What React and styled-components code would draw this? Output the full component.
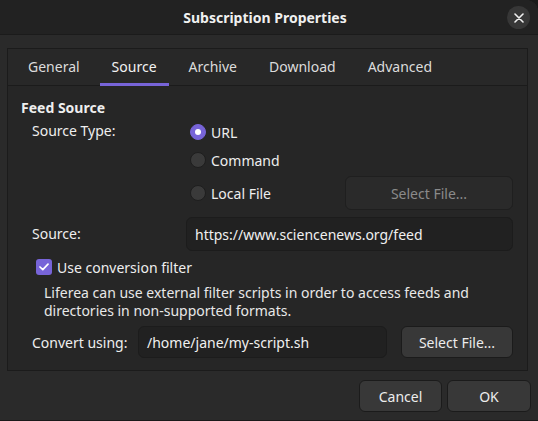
import React from "react";
import styled, { createGlobalStyle } from "styled-components";

const GlobalStyle = createGlobalStyle`
    html, body {
        margin: 0;
        padding: 0;
        background: #1a1a1a;
    }
    body {
        font-family: "Noto Sans", "DejaVu Sans", sans-serif;
        font-size: 14px;
        color: #eeeeee;
    }
`;

const Window = styled.div`
    width: 538px;
    height: 421px;
    box-sizing: border-box;
    background: #2a2a2a;
    border-top-right-radius: 12px;
    border-bottom: 1px solid #1a1a1a;
    overflow: hidden;
    display: flex;
    flex-direction: column;
`;

const HeaderBar = styled.div`
    height: 35px;
    flex: none;
    box-sizing: border-box;
    background: #222222;
    border-bottom: 1px solid #1b1b1b;
    display: grid;
    grid-template-columns: 1fr auto 1fr;
    align-items: center;
    padding-right: 8px;
`;

const Title = styled.div`
    grid-column: 2;
    font-weight: bold;
    font-size: 14px;
    color: #f0f0f0;
`;

const CloseButton = styled.button`
    grid-column: 3;
    justify-self: end;
    width: 23px;
    height: 23px;
    border-radius: 50%;
    border: none;
    padding: 0;
    background: #373737;
    display: flex;
    align-items: center;
    justify-content: center;
    margin-top: 1px;
`;

const Body = styled.div`
    flex: 1;
    display: flex;
    flex-direction: column;
    padding: 13px 10px 0 7px;
`;

const Notebook = styled.div`
    border: 1px solid #1b1b1b;
    background: #262626;
    display: flex;
    flex-direction: column;
`;

const TabBar = styled.div`
    height: 36px;
    display: flex;
    gap: 8px;
    padding: 0 8px;
    background: #282828;
    border-bottom: 1px solid #1b1b1b;
`;

const Tab = styled.div`
    position: relative;
    padding: 0 12px;
    display: flex;
    align-items: center;
    padding-bottom: 1px;
    color: ${(p) => (p.$active ? "#f2f2f2" : "#dcdcdc")};
    &::after {
        content: "";
        position: absolute;
        left: 0;
        right: 0;
        bottom: -1px;
        height: 3px;
        background: ${(p) => (p.$active ? "#7764d8" : "transparent")};
    }
`;

const Page = styled.div`
    padding: 12px 14px 12px 13px;
    display: flex;
    flex-direction: column;
`;

const SectionTitle = styled.div`
    font-weight: bold;
    line-height: 20px;
`;

const Indented = styled.div`
    padding-left: 11px;
    display: flex;
    flex-direction: column;
`;

const FormGrid = styled.div`
    display: grid;
    grid-template-columns: 154px 1fr;
`;

const Label = styled.div`
    line-height: 20px;
    padding-top: ${(p) => p.$top || 0}px;
    align-self: ${(p) => (p.$center ? "center" : "start")};
    white-space: nowrap;
`;

const RadioList = styled.div`
    display: flex;
    flex-direction: column;
    padding-left: 4px;
`;

const RadioRow = styled.div`
    display: flex;
    align-items: center;
    height: ${(p) => p.$h || 28}px;
`;

const RadioDot = styled.span`
    width: 16px;
    height: 16px;
    box-sizing: border-box;
    border-radius: 50%;
    flex: none;
    margin-right: 5px;
    display: flex;
    align-items: center;
    justify-content: center;
    background: ${(p) => (p.$checked ? "#7764d8" : "#3a3a3a")};
    border: 1px solid ${(p) => (p.$checked ? "#7764d8" : "#1e1e1e")};
    &::after {
        content: "";
        width: 6px;
        height: 6px;
        border-radius: 50%;
        background: ${(p) => (p.$checked ? "#ffffff" : "transparent")};
    }
`;

const Spacer = styled.div`
    flex: 1;
`;

const Button = styled.button`
    font-family: inherit;
    font-size: 14px;
    height: ${(p) => p.$h || 32}px;
    width: ${(p) => p.$w}px;
    box-sizing: border-box;
    border-radius: 6px;
    border: 1px solid ${(p) => (p.$disabled ? "#1f1f1f" : "#1b1b1b")};
    background: ${(p) => (p.$disabled ? "#2a2a2a" : "#383838")};
    color: ${(p) => (p.$disabled ? "#8a8a8a" : "#ececec")};
    flex: none;
    padding: 0;
`;

const Entry = styled.div`
    height: ${(p) => p.$h || 34}px;
    box-sizing: border-box;
    border: 1px solid #1c1c1c;
    border-radius: 6px;
    background: #212121;
    display: flex;
    align-items: center;
    padding: 0 8px;
    color: #f0f0f0;
    flex: ${(p) => (p.$grow ? 1 : "none")};
    margin-top: ${(p) => p.$mt || 0}px;
`;

const CheckRow = styled.div`
    display: flex;
    align-items: center;
    height: 22px;
    margin-top: 5px;
    padding-left: 4px;
`;

const CheckBox = styled.span`
    width: 16px;
    height: 16px;
    border-radius: 3px;
    background: #7764d8;
    display: flex;
    align-items: center;
    justify-content: center;
    margin-right: 5px;
`;

const Description = styled.div`
    padding-left: 12px;
    margin-top: 6px;
    line-height: 18px;
    color: #e8e8e8;
`;

const ConvertRow = styled.div`
    display: flex;
    align-items: center;
    gap: 14px;
    margin-top: 6px;
`;

const ConvertLabel = styled.div`
    width: 92px;
    flex: none;
    white-space: nowrap;
`;

const ActionBar = styled.div`
    display: flex;
    justify-content: flex-end;
    gap: 5px;
    padding: 9px 7px 0 0;
    margin-right: -10px;
`;

export default function App() {
    return (
        <>
            <GlobalStyle />
            <Window>
                <HeaderBar>
                    <Title>Subscription Properties</Title>
                    <CloseButton>
                        <svg width="10" height="10" viewBox="0 0 10 10">
                            <path d="M1 1L9 9M9 1L1 9" stroke="#f0f0f0" strokeWidth="1.6" strokeLinecap="round" />
                        </svg>
                    </CloseButton>
                </HeaderBar>
                <Body>
                    <Notebook>
                        <TabBar>
                            <Tab>General</Tab>
                            <Tab $active>Source</Tab>
                            <Tab>Archive</Tab>
                            <Tab>Download</Tab>
                            <Tab>Advanced</Tab>
                        </TabBar>
                        <Page>
                            <SectionTitle>Feed Source</SectionTitle>
                            <Indented>
                                <FormGrid>
                                    <Label $top={3}>Source Type:</Label>
                                    <RadioList>
                                        <RadioRow>
                                            <RadioDot $checked />
                                            URL
                                        </RadioRow>
                                        <RadioRow>
                                            <RadioDot />
                                            Command
                                        </RadioRow>
                                        <RadioRow $h={38}>
                                            <RadioDot />
                                            Local File
                                            <Spacer />
                                            <Button $disabled $w={168} $h={34}>Select File...</Button>
                                        </RadioRow>
                                    </RadioList>
                                    <Label $center $top={5}>Source:</Label>
                                    <Entry $mt={5}>https://www.sciencenews.org/feed</Entry>
                                </FormGrid>
                                <CheckRow>
                                    <CheckBox>
                                        <svg width="10" height="8" viewBox="0 0 10 8">
                                            <path d="M1 4L3.8 6.6L9 1.2" fill="none" stroke="#ffffff" strokeWidth="1.7" strokeLinecap="round" strokeLinejoin="round" />
                                        </svg>
                                    </CheckBox>
                                    Use conversion filter
                                </CheckRow>
                                <Description>
                                    Liferea can use external filter scripts in order to access feeds and
                                    <br />
                                    directories in non-supported formats.
                                </Description>
                                <ConvertRow>
                                    <ConvertLabel>Convert using:</ConvertLabel>
                                    <Entry $grow $h={32}>/home/jane/my-script.sh</Entry>
                                    <Button $w={112}>Select File...</Button>
                                </ConvertRow>
                            </Indented>
                        </Page>
                    </Notebook>
                    <ActionBar>
                        <Button $w={83}>Cancel</Button>
                        <Button $w={84}>OK</Button>
                    </ActionBar>
                </Body>
            </Window>
        </>
    );
}
